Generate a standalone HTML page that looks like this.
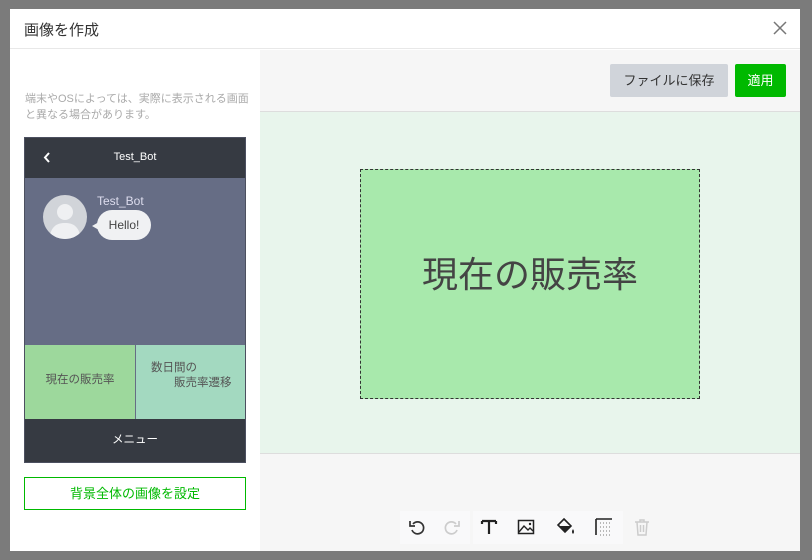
<!DOCTYPE html>
<html><head><meta charset="utf-8"><style>
*{margin:0;padding:0;box-sizing:border-box}
body{width:812px;height:560px;background:#7b7b7b;font-family:"Liberation Sans","Noto Sans CJK JP",sans-serif;position:relative;overflow:hidden}
.m{position:absolute;left:10px;top:9px;width:790px;height:542px;background:#fff}
.hd{position:absolute;left:0;top:0;width:790px;height:40px;border-bottom:1px solid #e8e8e8}
.hd span{position:absolute;left:14px;top:10px;font-size:15px;color:#333}
.x{position:absolute;right:12px;top:11px}
.lp{position:absolute;left:0;top:41px;width:250px;height:501px;background:#fff}
.rp{position:absolute;left:250px;top:41px;width:540px;height:501px;background:#f6f6f6}
.note{position:absolute;left:15px;top:41px;width:228px;font-size:11px;line-height:16px;color:#aaa}
.ph{position:absolute;left:14px;top:87px;width:222px;height:326px;background:#666d85;border:1px solid #4c5060}
.phh{height:40px;background:#363a42;color:#fff;font-size:11px;text-align:center;line-height:38px;position:relative}
.av{position:absolute;left:18px;top:57px;width:44px;height:44px;border-radius:50%;background:#d1d4d9;overflow:hidden}
.cells{position:absolute;left:0;top:207px;width:220px;height:74px}
.c1{position:absolute;left:0;top:0;width:110px;height:74px;background:#9dd89c;font-size:11.5px;color:#555;text-align:center;line-height:70px}
.c2{position:absolute;left:111px;top:0;width:109px;height:74px;background:#a3d9c0;font-size:11.5px;color:#555;line-height:15px;padding-top:16px}
.bb{position:absolute;left:0;top:281px;width:220px;height:43px;background:#363a42;color:#fff;font-size:11.5px;text-align:center;line-height:43px}
.btn{position:absolute;left:14px;top:427px;width:222px;height:33px;border:1px solid #00b900;color:#00b900;font-size:13px;text-align:center;line-height:31px}
.tb{position:absolute;left:0;top:0;width:540px;height:62px;border-bottom:1px solid #ddd}
.sv{position:absolute;left:350px;top:14px;width:118px;height:33px;background:#d0d4da;color:#333;font-size:13px;text-align:center;line-height:33px;border-radius:2px}
.ap{position:absolute;left:475px;top:14px;width:51px;height:33px;background:#00b900;color:#fff;font-size:13px;text-align:center;line-height:33px;border-radius:2px}
.cv{position:absolute;left:0;top:62px;width:540px;height:342px;background:#e8f5ec;border-bottom:1px solid #ddd}
.gr{position:absolute;left:100px;top:57px;width:340px;height:230px;background:#a8e9ac;border:1px dashed #333;font-size:36px;color:#444;text-align:center;line-height:210px}
.ic{position:absolute;top:461px;height:33px;background:#f9f9fa}
</style></head><body>
<div class="m">
<div class="hd"><span>画像を作成</span>
<svg class="x" width="16" height="16" viewBox="0 0 16 16"><path d="M2 2L14 14M14 2L2 14" stroke="#777" stroke-width="1.5"/></svg></div>
<div class="lp">
<div class="note">端末やOSによっては、実際に表示される画面と異なる場合があります。</div>
<div class="ph">
<div class="phh"><svg style="position:absolute;left:18px;top:14px" width="8" height="11" viewBox="0 0 8 11"><path d="M6 1L2 5.5L6 10" stroke="#fff" stroke-width="2" fill="none"/></svg>Test_Bot</div>
<div class="av"><svg width="44" height="44" viewBox="0 0 44 44"><circle cx="22" cy="17" r="8" fill="#eff0f2"/><path d="M6 44C8 31 14 28 22 28S36 31 38 44Z" fill="#eff0f2"/></svg></div>
<div style="position:absolute;left:72px;top:56px;font-size:12px;color:#dde">Test_Bot</div>
<div style="position:absolute;left:72px;top:72px;width:54px;height:30px;background:#f0f1f3;border-radius:15px;font-size:12px;color:#444;text-align:center;line-height:30px">Hello!</div>
<div style="position:absolute;left:67px;top:84px;width:0;height:0;border-top:4px solid transparent;border-bottom:4px solid transparent;border-right:7px solid #f0f1f3"></div>
<div class="cells"><div class="c1">現在の販売率</div><div class="c2"><div style="padding-left:15px">数日間の</div><div style="padding-left:38px">販売率遷移</div></div></div>
<div class="bb">メニュー</div>
</div>
<div class="btn">背景全体の画像を設定</div>
</div>
<div class="rp">
<div class="tb"><div class="sv">ファイルに保存</div><div class="ap">適用</div></div>
<div class="cv"><div class="gr">現在の販売率</div></div>
<div class="ic" style="left:140px;width:70px"></div>
<div class="ic" style="left:213px;width:150px"></div>
<svg style="position:absolute;left:148px;top:468px" width="18" height="18" viewBox="0 0 18 18"><path d="M5 6A6 6 0 1 1 4 12" stroke="#333" stroke-width="1.7" fill="none"/><path d="M2 3V8H7" stroke="#333" stroke-width="1.7" fill="none"/></svg>
<svg style="position:absolute;left:183px;top:468px" width="18" height="18" viewBox="0 0 18 18"><path d="M13 6A6 6 0 1 0 14 12" stroke="#ccc" stroke-width="1.7" fill="none"/><path d="M16 3V8H11" stroke="#ccc" stroke-width="1.7" fill="none"/></svg>
<svg style="position:absolute;left:220px;top:468px" width="18" height="18" viewBox="0 0 18 18"><path d="M2 3H16M9 3V16M2 3V6M16 3V6" stroke="#222" stroke-width="2.2" fill="none"/></svg>
<svg style="position:absolute;left:257px;top:468px" width="18" height="18" viewBox="0 0 18 18"><rect x="1.5" y="2.5" width="15" height="13" stroke="#222" stroke-width="1.5" fill="none"/><path d="M2 14L7 8L11 12L13 10L16 13" stroke="#222" stroke-width="1.4" fill="none"/><circle cx="13" cy="6" r="1.2" fill="#222"/></svg>
<svg style="position:absolute;left:296px;top:467px" width="20" height="20" viewBox="0 0 20 20"><path d="M8 2L15 9L9 15L2 8Z" stroke="#222" stroke-width="1.6" fill="none"/><path d="M3 9L15 9L9 15Z" fill="#222"/><path d="M17 12Q19 15 17 17Q15 15 17 12Z" fill="#222"/></svg>
<svg style="position:absolute;left:335px;top:468px" width="18" height="18" viewBox="0 0 18 18"><path d="M1 1H17M1 1V17" stroke="#222" stroke-width="1.6"/><path d="M5 5H17M5 9H17M5 13H17M5 17H17" stroke="#777" stroke-width="1" stroke-dasharray="1 2"/></svg>
<svg style="position:absolute;left:373px;top:468px" width="18" height="18" viewBox="0 0 18 18"><path d="M2 4H16M7 4V2H11V4M4 4L5 17H13L14 4M7.5 7V14M10.5 7V14" stroke="#ccc" stroke-width="1.5" fill="none"/></svg>
</div>
</div>
</body></html>
